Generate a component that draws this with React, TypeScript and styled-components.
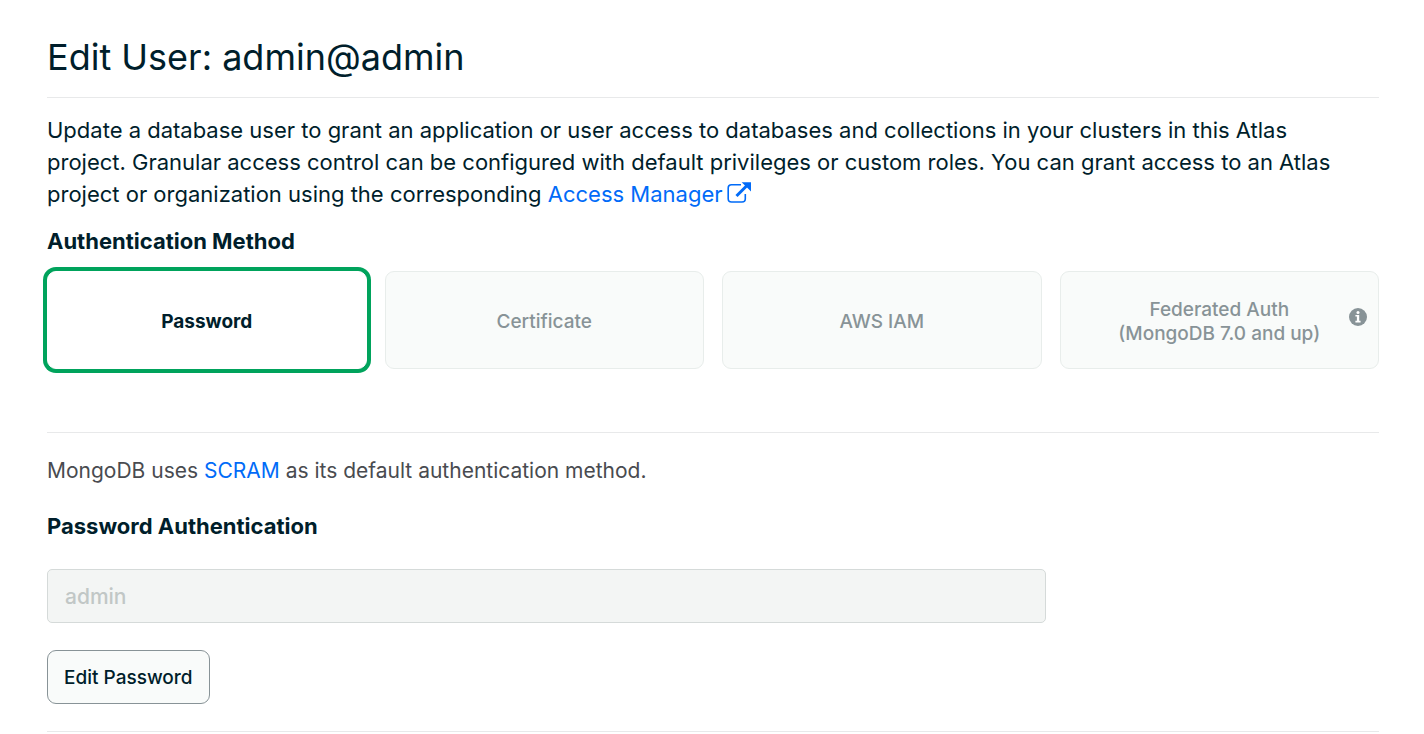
import React, { useState } from "react";
import styled, { createGlobalStyle } from "styled-components";

const GlobalStyle = createGlobalStyle`
  *, *::before, *::after { box-sizing: border-box; }
  body {
    margin: 0;
    background: #fff;
    color: #001e2b;
    font-family: Inter, "Liberation Sans", sans-serif;
  }
`;

const Page = styled.main`
  padding: 34px 45px 0 47px;
`;

const Title = styled.h1`
  margin: 0;
  font-size: 36px;
  font-weight: 400;
  line-height: 46px;
`;

const Divider = styled.hr<{ $top: number }>`
  height: 1px;
  margin: ${(p) => p.$top}px 0 0;
  border: 0;
  background: #e8e9ea;
`;

const Intro = styled.p`
  margin: 16px 0 0;
  padding-right: 20px;
  font-size: 22px;
  line-height: 32px;
`;

const Link = styled.a`
  color: #016bf8;
  text-decoration: none;
  &:hover { text-decoration: underline; }
`;

const ExternalIcon = styled.svg`
  width: 24px;
  height: 24px;
  margin-left: 4px;
  vertical-align: -3px;
`;

const Methods = styled.fieldset`
  min-width: 0;
  margin: 15px 0 0;
  padding: 0;
  border: 0;
`;

const Legend = styled.legend`
  padding: 0;
  font-size: 22px;
  font-weight: 700;
  line-height: 32px;
`;

const MethodGrid = styled.div`
  display: grid;
  grid-template-columns: repeat(4, 1fr);
  gap: 18px;
  margin-top: 14px;
`;

const MethodCard = styled.label<{ $selected: boolean }>`
  position: relative;
  display: flex;
  align-items: center;
  justify-content: center;
  min-height: 98px;
  padding: 6px 40px 2px;
  border: 1px solid ${(p) => (p.$selected ? "#fff" : "#e8edeb")};
  border-radius: 9px;
  background: ${(p) => (p.$selected ? "#fff" : "#f9fbfa")};
  box-shadow: ${(p) => (p.$selected ? "0 0 0 4px #00a35c" : "none")};
  color: ${(p) => (p.$selected ? "#001e2b" : "#889397")};
  font-size: 19px;
  font-weight: ${(p) => (p.$selected ? 700 : 500)};
  line-height: 24px;
  text-align: center;
  white-space: pre-line;
  cursor: pointer;
`;

const MethodRadio = styled.input`
  position: absolute;
  inset: 0;
  width: 100%;
  height: 100%;
  margin: 0;
  opacity: 0;
  cursor: pointer;
`;

const InfoIcon = styled.svg`
  position: absolute;
  top: 36px;
  right: 11px;
  width: 18px;
  height: 18px;
`;

const Note = styled.p`
  margin: 22px 0 0;
  color: #494b50;
  font-size: 21px;
  line-height: 32px;
`;

const FieldLabel = styled.label`
  display: block;
  margin-top: 23px;
  font-size: 22px;
  font-weight: 700;
  line-height: 32px;
`;

const TextField = styled.input`
  display: block;
  width: 75%;
  height: 54px;
  margin-top: 27px;
  padding: 0 17px;
  border: 1px solid #d5dad9;
  border-radius: 5px;
  background: #f3f5f4;
  color: #c1c7c6;
  font: inherit;
  font-size: 21px;
  font-weight: 500;
`;

const Button = styled.button`
  height: 54px;
  margin-top: 27px;
  padding: 0 16px;
  border: 1px solid #889397;
  border-radius: 9px;
  background: #f9fbfa;
  color: #001e2b;
  font: inherit;
  font-size: 19px;
  font-weight: 500;
  white-space: nowrap;
  cursor: pointer;
`;

const methods = [
  { id: "password", label: "Password" },
  { id: "certificate", label: "Certificate" },
  { id: "aws", label: "AWS IAM" },
  { id: "federated", label: "Federated Auth\n(MongoDB 7.0 and up)", info: true },
];

export default function App() {
  const [method, setMethod] = useState("password");
  return (
    <>
      <GlobalStyle />
      <Page>
        <Title>Edit User: admin@admin</Title>
        <Divider $top={17} />
        <Intro>
          Update a database user to grant an application or user access to databases and
          collections in your clusters in this Atlas project. Granular access control can be
          configured with default privileges or custom roles. You can grant access to an Atlas
          project or organization using the corresponding{" "}
          <Link href="#access">
            Access Manager
            <ExternalIcon viewBox="0 0 24 24" fill="none" aria-hidden="true">
              <path
                d="M14 3.7H4.5Q1.2 3.7 1.2 7V17.7Q1.2 21 4.5 21H15Q18.3 21 18.3 17.7V13"
                stroke="currentColor"
                strokeWidth="1.6"
              />
              <path d="M9.5 15 20 4.5" stroke="currentColor" strokeWidth="3" />
              <path d="M14.7 1.2H24V10.5Z" fill="currentColor" />
            </ExternalIcon>
          </Link>
        </Intro>
        <Methods>
          <Legend>Authentication Method</Legend>
          <MethodGrid>
            {methods.map((m) => (
              <MethodCard key={m.id} $selected={m.id === method}>
                <MethodRadio
                  type="radio"
                  name="method"
                  value={m.id}
                  checked={m.id === method}
                  onChange={() => setMethod(m.id)}
                />
                {m.label}
                {m.info && (
                  <InfoIcon viewBox="0 0 18 18" aria-hidden="true">
                    <circle cx="9" cy="9" r="9" fill="#889397" />
                    <circle cx="9" cy="4.4" r="1.5" fill="#fff" />
                    <path d="M6.4 7H10.2V12.8H11.6V14.4H6.4V12.8H7.9V8.5H6.4Z" fill="#fff" />
                  </InfoIcon>
                )}
              </MethodCard>
            ))}
          </MethodGrid>
        </Methods>
        <Divider $top={63} />
        <Note>
          MongoDB uses <Link href="#scram">SCRAM</Link> as its default authentication method.
        </Note>
        <FieldLabel htmlFor="username">Password Authentication</FieldLabel>
        <TextField id="username" value="admin" disabled readOnly />
        <Button type="button">Edit Password</Button>
        <Divider $top={27} />
      </Page>
    </>
  );
}
